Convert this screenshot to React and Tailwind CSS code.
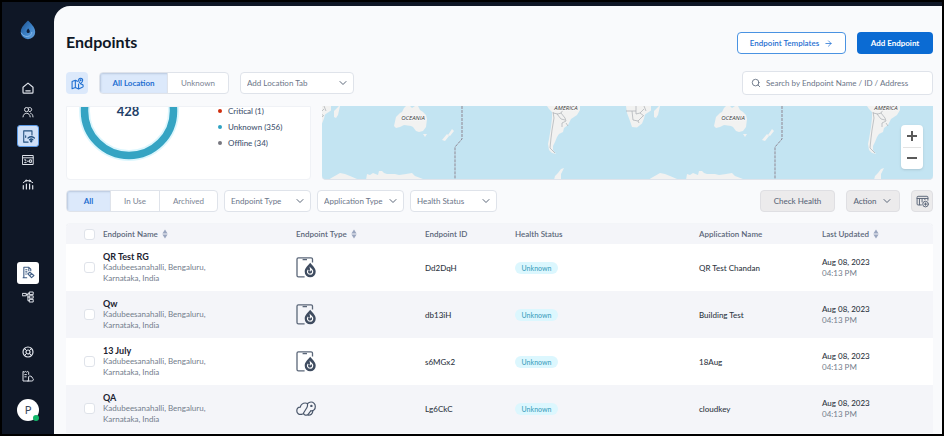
import { ArrowRight, ChevronDown, Search } from "lucide-react";
import { useState } from "react";

const endpoints = [
    { name: "QR Test RG", type: "phone", id: "Dd2DqH", app: "QR Test Chandan" },
    { name: "Qw", type: "phone", id: "db13iH", app: "Building Test" },
    { name: "13 July", type: "phone", id: "s6MGx2", app: "18Aug" },
    { name: "QA", type: "cloud", id: "Lg6CkC", app: "cloudkey" },
];

const legend = [
    { label: "Critical (1)", dot: "bg-[#cf2e0e]" },
    { label: "Unknown (356)", dot: "bg-[#2fa2c2]" },
    { label: "Offline (34)", dot: "bg-[#77777f]" },
];

const Icon = ({ children, className = "w-3 h-3" }) => (
    <svg
        viewBox="0 0 12 12"
        className={className}
        fill="none"
        stroke="currentColor"
        strokeLinecap="round"
        strokeLinejoin="round"
        aria-hidden="true"
    >
        {children}
    </svg>
);

const HomeIcon = () => (
    <Icon>
        <path d="M1 5.2 6 1.1l5 4.1v5a.9.9 0 0 1-.9.9H1.9a.9.9 0 0 1-.9-.9z" strokeWidth="1.2" />
        <path d="M3.8 8.8h4.4" strokeWidth="1.2" />
    </Icon>
);

const UsersIcon = () => (
    <Icon>
        <circle cx="4.6" cy="3.6" r="2.1" />
        <path d="M6.6 1.7a2.1 2.1 0 1 1 .6 3.9M1 10.9c.2-2.3 1.6-3.6 3.6-3.6s3.4 1.3 3.6 3.6M8.6 7.2c1.4.4 2.3 1.7 2.4 3.7" />
    </Icon>
);

const DoorIcon = () => (
    <Icon className="w-[13px] h-[13px]">
        <path d="M9.2 4.6V.8H1.6v10.4h4" />
        <path d="M3.4 5.4v1.4" />
        <path d="M5.6 7.4c1.8-1.5 4-1.5 5.8 0M7 9c.9-.8 2.1-.8 3 0" strokeWidth="1.2" />
        <circle cx="8.5" cy="10.4" r=".6" fill="currentColor" />
    </Icon>
);

const WindowIcon = () => (
    <Icon>
        <path d="M.8 1.5h10.4v9H.8zM.8 3.8h10.4" />
        <path d="M2.6 5.8h1.2v1.2M2.6 8.6h1.6M5.4 7.2h1.2M8 5.8h1.4v2.6H8z" />
    </Icon>
);

const AnalyticsIcon = () => (
    <Icon>
        <path d="M1.3 7.5V11M4.4 6v5M7.6 6v5M10.7 7.5V11" strokeWidth="1.2" />
        <path d="m1.3 4.6 2.9-2 3.5.3 3 1.7" />
        <circle cx="4.2" cy="2.6" r=".7" />
        <circle cx="7.7" cy="2.8" r=".7" />
    </Icon>
);

const BuildingIcon = () => (
    <Icon className="w-[13px] h-[13px]">
        <path d="M1.7 10.9V1.2h4.6l1.8 1.6v1.6M1 10.9h3.4M6.3 1.2v3.2M3.4 3.4h1.2M3.4 5.4h1.2M3.4 7.4h.6" />
        <path d="m5.4 7.2 1.8-1.4 3.8 3M5.4 7.2l3.4 3.6L11 8.8M7.2 8.8l1.4-1.2" />
    </Icon>
);

const TreeIcon = () => (
    <Icon>
        <path d="M.7 2.4h3.6v2.4H.7zM7.6 1h3.6v2.6H7.6zM7.6 4.8h3.6v2.4H7.6zM7.6 8.4h3.6V11H7.6z" />
        <path d="M4.3 3.6h1.6M7.6 2.3H5.9v7.4h1.7M5.9 6h1.7" />
    </Icon>
);

const SupportIcon = () => (
    <Icon>
        <circle cx="6" cy="6" r="5" strokeWidth="1.2" />
        <circle cx="6" cy="6" r="2" strokeWidth="1.2" />
        <path d="m2.6 2.6 2 2M9.4 2.6l-2 2M2.6 9.4l2-2M9.4 9.4l-2-2" />
    </Icon>
);

const LogsIcon = () => (
    <Icon>
        <path d="M5.6 11H1V1.4l1.2.8 1.2-.8 1.2.8 1.2-.8.9.8v2.2M2.8 4.6h1.6M2.8 6.8h1.4" />
        <path d="M5.6 11h4.2a1.5 1.5 0 0 0 .6-2.9 2.3 2.3 0 0 0-3.8-1.5V11" />
    </Icon>
);

const MapPinIcon = () => (
    <Icon className="w-[13px] h-[13px]">
        <path d="M6 4 4 3 1 4.2v6.6l3-1.2 3 1.4 3-1.2c.8-.3 1.3-.8 1.3-1.6s-.7-1.4-1.5-1.4M4 3v6.6M7 6.5V11" />
        <path d="M8.9 6.4C7.6 5.1 7 4.1 7 3.1a1.9 1.9 0 0 1 3.8 0c0 1-.6 2-1.9 3.3z" />
        <circle cx="8.9" cy="3" r=".4" />
    </Icon>
);

const TableSettingsIcon = () => (
    <Icon className="w-[13px] h-[13px]">
        <path d="M5 9.2H1.9A.9.9 0 0 1 1 8.3V2.1a.9.9 0 0 1 .9-.9h8.2a.9.9 0 0 1 .9.9v2.7M1 3.2h10M3.2 3.4v5.6M5.6 3.4v3M8.2 3.4v1" strokeWidth=".9" />
        <circle cx="8.8" cy="8.4" r="2.6" strokeWidth=".9" />
        <path d="M8.8 7.3v2.2M7.7 8.4h2.2" strokeWidth=".9" />
    </Icon>
);

const Logo = () => (
    <svg viewBox="0 0 16 20" className="w-4 h-5" role="img" aria-label="Logo">
        <defs>
            <linearGradient id="drop" x1="0" y1="0" x2="1" y2="1">
                <stop offset="0" stopColor="#1d4f8c" />
                <stop offset="0.5" stopColor="#3a7fc4" />
                <stop offset="1" stopColor="#6ba6e0" />
            </linearGradient>
        </defs>
        <path d="M8 .6C10.6 3.4 15.2 7 15.2 12A7.2 7.2 0 0 1 .8 12C.8 7 5.4 3.4 8 .6z" fill="url(#drop)" />
        <path d="M1.2 12.6c1.2 3 4 4.2 6.6 3.8s4-2.2 4-4.4" fill="none" stroke="#86b7e8" strokeWidth="1" />
        <path d="M8.2 8.6c.9 1.2 1.6 1.8 1.6 2.9a1.6 1.6 0 0 1-3.2 0c0-1.1.7-1.7 1.6-2.9z" fill="#0f1f3a" />
    </svg>
);

const PhoneDropIcon = () => (
    <svg viewBox="0 0 20 21" className="w-5 h-[21px]" fill="none" stroke="#5b6779" role="img" aria-label="Mobile">
        <path d="M16.5 5.5V2.2A1.4 1.4 0 0 0 15.1.8H2.4A1.4 1.4 0 0 0 1 2.2v16.2a1.4 1.4 0 0 0 1.4 1.4h6.2" strokeWidth="1.3" />
        <path d="M6.6 2.6H11" strokeWidth="1.3" />
        <path d="M14.2 5.8c2 2.7 5.5 5.1 5.5 9a5.5 5.5 0 0 1-11 0c0-3.9 3.5-6.3 5.5-9z" fill="#3f4c60" stroke="none" />
        <path d="M12.2 12.8c-1.5 1.7-.6 4.3 1.9 4.4 2.3 0 3.4-2.6 1.9-4.2l-1.5-1.6c.3 1.4-.1 2.4-.7 2.9" stroke="#fff" strokeWidth="1.2" />
    </svg>
);

const CloudKeyIcon = () => (
    <svg viewBox="0 0 20 16" className="w-5 h-4" fill="none" stroke="#4a576b" strokeWidth="1.2" strokeLinecap="round" role="img" aria-label="Cloud key">
        <path d="M5.2 13.4A3.7 3.7 0 0 1 .8 9.9c0-2.2 1.7-3.6 3.4-3.7C5 3.6 6.8 2 9.2 2c1 0 1.7.2 2.3.6" />
        <path d="M11.5 2.7C12.5 1.6 13.7 1 15 1a4.3 4.3 0 0 1 4.3 4.4c0 2.4-1.7 4.2-3.9 4.4l-.8.2" />
        <path d="M5.2 13.4c1 .2 1.7-.3 2.2-1.1l3.4-5.5c.7-1 .9-2.6.7-4.1M7.4 12.3c.5 1.6 2.2 2.2 3.6 1.7 1-.3 1.4-.8 1.9-1.6l1.7-2.4M12 14.2c2.8.3 4.6-1.2 4.9-4.6" />
        <circle cx="15.4" cy="4.9" r=".6" fill="#4a576b" />
    </svg>
);

const SortIcon = () => (
    <svg viewBox="0 0 6 10" className="w-[6px] h-[10px]" fill="#9aa6bf" aria-hidden="true">
        <path d="M3 .4 5.6 4.4H.4zM3 9.6.4 5.6h5.2z" />
    </svg>
);

const topNav = [
    { label: "Home", icon: HomeIcon },
    { label: "Users", icon: UsersIcon },
    { label: "Endpoints", icon: DoorIcon, style: "bg-[#cfe0f8] text-[#24507f] border border-[#5b9ae6]" },
    { label: "Credentials", icon: WindowIcon },
    { label: "Analytics", icon: AnalyticsIcon },
];

const midNav = [
    { label: "Buildings", icon: BuildingIcon, style: "bg-white text-[#3f5d85]" },
    { label: "Hierarchy", icon: TreeIcon },
];

const bottomNav = [
    { label: "Support", icon: SupportIcon },
    { label: "Logs", icon: LogsIcon },
];

const NavGroup = ({ items }) => (
    <nav className="flex flex-col gap-[2px]">
        {items.map(({ label, icon: ItemIcon, style = "text-[#dfe3ea]" }) => (
            <a
                key={label}
                href="#"
                aria-label={label}
                className={`flex items-center justify-center w-[22px] h-[22px] rounded-[3px] ${style}`}
            >
                <ItemIcon />
            </a>
        ))}
    </nav>
);

const Sidebar = () => (
    <aside className="flex flex-col items-center w-[52px] shrink-0 pt-[18px] pb-[13px]">
        <Logo />
        <div className="h-[37px]" />
        <NavGroup items={topNav} />
        <div className="grow-[2]" />
        <NavGroup items={midNav} />
        <div className="grow" />
        <NavGroup items={bottomNav} />
        <button
            type="button"
            className="relative mt-3 w-[22px] h-[22px] rounded-full bg-white text-[11px] text-[#3c4a5e]"
        >
            P
            <span className="absolute right-0 bottom-0 w-[6px] h-[6px] rounded-full bg-[#12b76a]" />
        </button>
    </aside>
);

const Dropdown = ({ label, className }) => (
    <div className={`relative h-[22px] ${className}`}>
        <select
            aria-label={label}
            className="w-full h-full pl-[6px] pr-5 appearance-none rounded-[4px] border border-[#dfe3ea] bg-white text-[#6b7588]"
        >
            <option>{label}</option>
        </select>
        <ChevronDown className="absolute right-[5px] top-[5px] w-3 h-3 text-[#5b6779] pointer-events-none" />
    </div>
);

const Segments = ({ options }) => {
    const [active, setActive] = useState(options[0].label);

    return (
        <div className="flex h-[22px] rounded-[4px] border border-[#dfe3ea] bg-white overflow-hidden divide-x divide-[#dfe3ea]">
            {options.map(({ label, width }) => (
                <button
                    key={label}
                    type="button"
                    onClick={() => setActive(label)}
                    className={`${width} ${
                        active === label
                            ? "bg-[#dce9fb] text-[#1f6fd1] font-bold shadow-[inset_1px_1px_2px_#b9c8de]"
                            : "text-[#7b8494]"
                    }`}
                >
                    {label}
                </button>
            ))}
        </div>
    );
};

const StatusCard = () => (
    <section className="flex w-[245px] h-[74px] shrink-0 rounded-b-[4px] border border-[#f0f2f6] bg-white overflow-hidden">
        <svg viewBox="0 0 125 72" className="w-[125px] h-[72px]" role="img" aria-label="428 endpoints">
            <circle cx="62" cy="4" r="44.5" fill="none" stroke="#dcf6fd" strokeWidth="11" />
            <circle cx="62" cy="4" r="44.5" fill="none" stroke="#35a4c3" strokeWidth="7.5" />
            <text x="61" y="9" textAnchor="middle" fontSize="13" fontWeight="700" fill="#1f3f68">
                428
            </text>
        </svg>
        <ul className="ml-[26px] -mt-1">
            {legend.map(({ label, dot }) => (
                <li key={label} className="flex items-center h-4 gap-[6px] font-medium text-[#44546f]">
                    <span className={`w-1 h-1 rounded-full ${dot}`} />
                    {label}
                </li>
            ))}
        </ul>
    </section>
);

// one full turn of the world, 320 units wide
const World = ({ offset }) => (
    <g transform={`translate(${offset} 0)`}>
        <g fill="#f2f2f1">
            <path d="M74 11l4-4 2-1 2-4 2-2h4l2 2 3-2h3l2 4 3 2 3 3 1 4-1 8-3 4-4 1-3-1-3-4-2-1-7-1-4 2-4 1-2-2z" />
            <path d="M101 28h4l-2 3zM120 34l5-6 2 2-4 5zM126 29l4-6 2 2-4 5z" />
            <path d="M225 0l2 3 3 3v6l-1 9-1 6-1 6-1 5 1 6 3 3 4 1-3-4v-4l2-4 2-5 2-3 4-2 1-4 4-3 3-6 6-4 3-5V0z" />
            <path d="M232 74l1-4 3-3 3-4 3-1-3 6v6z" />
            <path d="M304 0l1 7 3 8 2 6 5 .5 5-4 2-5 1-4 6-4V0zM332 11v-6l5-5h1l-2 9-2 3z" />
            <path d="M6 74l5-3 7-4 5 1 5 2 7 3v1zM44 74l1-6 3 1 3-2 5 2 1-4h3l2 2 3 1 8 0 4 1 7-1 6-1 3 3 8 3v1z" />
        </g>
        <g fill="none" stroke="#a9adb2" strokeWidth=".7">
            <path d="M231 6l1 6-2 12-1 8-1 10 5 5M231 7l5 1 3-1 4 5 1 3-4 2v4M239 7l2-3M235 8l4 5 4 1M244 17l2 3M304 5h10v3l4-1 4 3M311 14l-1-9M314 0v5M311 14l5 1 5-5M316 15l1 2M318 7l4-4M322 0l2 5" />
        </g>
        <path d="M140 0v33l-7 8v33" fill="none" stroke="#8f8792" strokeWidth="1" strokeDasharray="3 1" />
    </g>
);

const regions = [
    { name: "OCEANIA", x: 91, y: 14 },
    { name: "AMERICA", x: 244, y: 4 },
    { name: "OCEANIA", x: 411, y: 14 },
    { name: "AMERICA", x: 564, y: 4 },
];

const WorldMap = () => (
    <section className="relative flex-1 h-[74px] rounded-b-[4px] bg-[#c3e4f2] border-b border-[#dfe3ea] overflow-hidden">
        <svg
            viewBox="0 0 611 74"
            preserveAspectRatio="xMinYMin slice"
            className="w-full h-full font-['Open_Sans',sans-serif]"
            role="img"
            aria-label="Endpoint map"
        >
            <World offset={-320} />
            <World offset={0} />
            <World offset={320} />
            <g
                fontSize="6"
                fontStyle="italic"
                fontWeight="500"
                fill="#3a3a3a"
                textAnchor="middle"
                stroke="#f7f7f7"
                strokeWidth="1.5"
                paintOrder="stroke"
            >
                {regions.map(({ name, x, y }) => (
                    <text key={x} x={x} y={y}>{name}</text>
                ))}
            </g>
        </svg>
        <div className="absolute right-[10px] top-[19px] flex flex-col w-[22px] h-11 rounded-[4px] bg-white shadow text-[#5a5a5a]">
            <button type="button" aria-label="Zoom in" className="flex-1 flex items-center justify-center">
                <Icon>
                    <path d="M1 6h10M6 1v10" strokeWidth="2" strokeLinecap="butt" />
                </Icon>
            </button>
            <div className="mx-[2px] h-px bg-[#e3e3e3]" />
            <button type="button" aria-label="Zoom out" className="flex-1 flex items-center justify-center">
                <Icon>
                    <path d="M1 6h10" strokeWidth="2" strokeLinecap="butt" />
                </Icon>
            </button>
        </div>
    </section>
);

const Checkbox = ({ label }) => (
    <input
        type="checkbox"
        aria-label={label}
        className="block ml-[18px] w-[11px] h-[11px] appearance-none rounded-[3px] border border-[#dfe3ea] bg-white checked:bg-[#0b6bd3]"
    />
);

const EndpointTable = () => (
    <table className="w-full table-fixed text-left bg-white">
        <colgroup>
            <col className="w-[37px]" />
            <col className="w-[193px]" />
            <col className="w-[129px]" />
            <col className="w-[90px]" />
            <col className="w-[184px]" />
            <col className="w-[123px]" />
            <col className="w-[111px]" />
        </colgroup>
        <thead>
            <tr className="h-5 bg-[#f4f5f9] text-[#5b6779]">
                <th className="p-0"><Checkbox label="Select all" /></th>
                <th className="p-0 font-semibold">
                    <span className="flex items-center gap-1">Endpoint Name <SortIcon /></span>
                </th>
                <th className="p-0 font-semibold">
                    <span className="flex items-center gap-1">Endpoint Type <SortIcon /></span>
                </th>
                <th className="p-0 font-semibold">Endpoint ID</th>
                <th className="p-0 font-semibold">Health Status</th>
                <th className="p-0 font-semibold">Application Name</th>
                <th className="p-0 font-semibold">
                    <span className="flex items-center gap-1">Last Updated <SortIcon /></span>
                </th>
            </tr>
        </thead>
        <tbody>
            {endpoints.map(({ name, type, id, app }) => (
                <tr key={name} className="h-[47px] even:bg-[#f4f5f9] font-medium text-[#2f3744]">
                    <td className="p-0"><Checkbox label={`Select ${name}`} /></td>
                    <td className="p-0 leading-[11px]">
                        <div className="text-[9px] font-bold text-[#1b2230]">{name}</div>
                        <div className="font-normal text-[#737d8c]">
                            Kadubeesanahalli, Bengaluru,
                            <br />
                            Karnataka, India
                        </div>
                    </td>
                    <td className="p-0">{type === "phone" ? <PhoneDropIcon /> : <CloudKeyIcon />}</td>
                    <td className="p-0">{id}</td>
                    <td className="p-0">
                        <span className="inline-flex items-center justify-center w-[43px] h-3 rounded-full bg-[#dcf7fe] text-[7px] text-[#3f9fbd]">
                            Unknown
                        </span>
                    </td>
                    <td className="p-0">{app}</td>
                    <td className="p-0 leading-[11px]">
                        Aug 08, 2023
                        <div className="font-normal text-[#737d8c]">04:13 PM</div>
                    </td>
                </tr>
            ))}
        </tbody>
    </table>
);

export default function App() {
    return (
        <div className="flex h-screen overflow-hidden border-2 border-black bg-[#0f1726] font-[Lato,sans-serif] text-[8px] leading-3">
            <Sidebar />
            <main className="flex flex-col flex-1 min-w-0 mt-1 pl-3 pr-[9px] pt-[26px] rounded-tl-[16px] bg-[#f9fafc]">
                <header className="flex items-center h-[22px] shrink-0 gap-[11px]">
                    <h1 className="mr-auto text-[16px] leading-5 pb-[2px] font-bold text-[#0f1726]">Endpoints</h1>
                    <button
                        type="button"
                        className="flex items-center justify-center gap-[5px] w-[109px] h-[22px] rounded-[4px] border border-[#4a93e2] bg-white font-semibold text-[#1f6fd1]"
                    >
                        Endpoint Templates
                        <ArrowRight className="w-[9px] h-[9px]" />
                    </button>
                    <button type="button" className="w-[76px] h-[22px] rounded-[4px] bg-[#0b6bd3] font-bold text-white">
                        Add Endpoint
                    </button>
                </header>

                <div className="flex items-center shrink-0 mt-[17px] gap-[11px]">
                    <button
                        type="button"
                        aria-label="Toggle map"
                        className="flex items-center justify-center w-[22px] h-[22px] rounded-[4px] bg-[#dce9fb] text-[#1f6fd1]"
                    >
                        <MapPinIcon />
                    </button>
                    <Segments
                        options={[
                            { label: "All Location", width: "w-[68px]" },
                            { label: "Unknown", width: "w-[60px]" },
                        ]}
                    />
                    <Dropdown label="Add Location Tab" className="w-[114px]" />
                    <label className="flex items-center ml-auto w-[191px] h-6 px-2 gap-[5px] rounded-[4px] border border-[#dfe3ea] bg-white">
                        <Search className="w-[10px] h-[10px] text-[#5b6779]" />
                        <input
                            type="text"
                            aria-label="Search endpoints"
                            placeholder="Search by Endpoint Name / ID / Address"
                            className="flex-1 min-w-0 outline-none placeholder:text-[#6b7588]"
                        />
                    </label>
                </div>

                <div className="flex-1 min-h-0 mt-[11px] overflow-hidden">
                    <div className="flex gap-[11px]">
                        <StatusCard />
                        <WorldMap />
                    </div>

                    <div className="flex items-center mt-[10px] gap-[6px]">
                        <Segments
                            options={[
                                { label: "All", width: "w-[44px]" },
                                { label: "In Use", width: "w-[49px]" },
                                { label: "Archived", width: "w-[57px]" },
                            ]}
                        />
                        <Dropdown label="Endpoint Type" className="w-[87px]" />
                        <Dropdown label="Application Type" className="w-[87px]" />
                        <Dropdown label="Health Status" className="w-[87px]" />
                        <div className="flex ml-auto gap-[11px] font-medium text-[#5b6779]">
                            <button type="button" className="w-[75px] h-[22px] rounded-[4px] border border-[#dfdfe3] bg-[#ecebec]">
                                Check Health
                            </button>
                            <button
                                type="button"
                                className="flex items-center justify-center gap-1 w-[54px] h-[22px] rounded-[4px] border border-[#dfdfe3] bg-[#ecebec]"
                            >
                                Action
                                <ChevronDown className="w-3 h-3" />
                            </button>
                            <button
                                type="button"
                                aria-label="Table settings"
                                className="flex items-center justify-center w-[22px] h-[22px] rounded-[4px] border border-[#dfdfe3] bg-[#ecebec]"
                            >
                                <TableSettingsIcon />
                            </button>
                        </div>
                    </div>

                    <div className="mt-3 rounded-t-[4px] shadow-[0_0_1px_#c3c9d4] overflow-hidden">
                        <EndpointTable />
                    </div>
                </div>
            </main>
        </div>
    );
}
